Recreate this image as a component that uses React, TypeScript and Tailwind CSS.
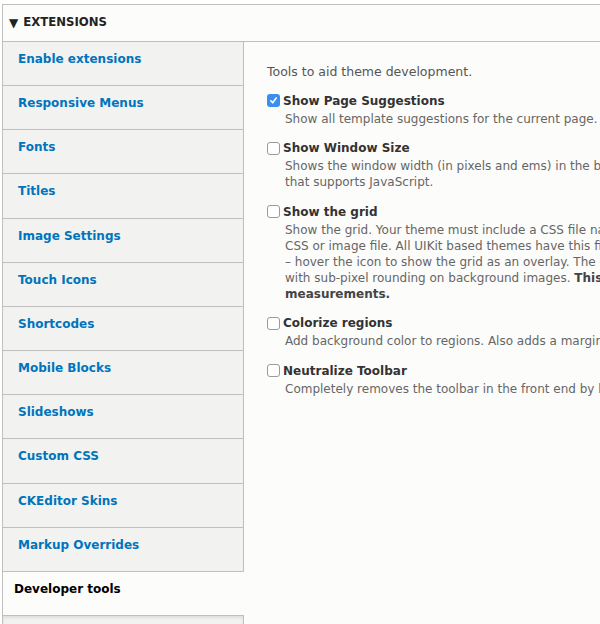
import React from 'react';

const tabs = [
  'Enable extensions',
  'Responsive Menus',
  'Fonts',
  'Titles',
  'Image Settings',
  'Touch Icons',
  'Shortcodes',
  'Mobile Blocks',
  'Slideshows',
  'Custom CSS',
  'CKEditor Skins',
  'Markup Overrides',
];

interface Option {
  label: string;
  checked: boolean;
  lines: React.ReactNode[];
}

const options: Option[] = [
  {
    label: 'Show Page Suggestions',
    checked: true,
    lines: ['Show all template suggestions for the current page. Disable when not in use.'],
  },
  {
    label: 'Show Window Size',
    checked: false,
    lines: [
      'Shows the window width (in pixels and ems) in the bottom corner of any browser',
      'that supports JavaScript.',
    ],
  },
  {
    label: 'Show the grid',
    checked: false,
    lines: [
      'Show the grid. Your theme must include a CSS file named grid.css or similar',
      'CSS or image file. All UIKit based themes have this file available to use',
      '– hover the icon to show the grid as an overlay. The grid may not be accurate',
      <>
        with sub-pixel rounding on background images.{' '}
        <b className="font-bold text-[#444]">This is not for precise</b>
      </>,
      <b className="font-bold text-[#444]">measurements.</b>,
    ],
  },
  {
    label: 'Colorize regions',
    checked: false,
    lines: ['Add background color to regions. Also adds a margin to help with layout.'],
  },
  {
    label: 'Neutralize Toolbar',
    checked: false,
    lines: ['Completely removes the toolbar in the front end by hiding it with CSS.'],
  },
];

function Checkbox({ checked }: { checked: boolean }) {
  if (checked) {
    return (
      <span className="flex h-[13px] w-[13px] shrink-0 items-center justify-center rounded-[3px] bg-[#3b8ef0]">
        <svg width="9" height="9" viewBox="0 0 9 9" fill="none">
          <path d="M1.8 4.8 L3.7 6.8 L7.2 2" stroke="white" strokeWidth="1.6" strokeLinecap="round" strokeLinejoin="round" />
        </svg>
      </span>
    );
  }
  return <span className="h-[13px] w-[13px] shrink-0 rounded-[3px] border border-[#9a9a9a] bg-white" />;
}

export default function App() {
  return (
    <div
      className="h-[624px] w-[600px] overflow-hidden bg-white pl-[2px] pt-[4px]"
      style={{ fontFamily: '"DejaVu Sans", Verdana, sans-serif' }}
    >
      <div className="w-[900px] border-l border-t border-[#bfbfbf] bg-[#fcfcfa]">
        {/* Details summary */}
        <div className="flex h-[37px] items-center border-b border-[#bfbfbf] pl-[6px] text-[11.7px] font-bold text-[#222]">
          <span className="mr-[5px] text-[12px] leading-none">▼</span>
          EXTENSIONS
        </div>

        <div className="flex">
          {/* Vertical tabs */}
          <div className="w-[241px] shrink-0">
            {tabs.map(t => (
              <div
                key={t}
                className="h-[44.17px] border-b border-r border-[#bfbfbf] bg-[#f2f2f0] pl-[15px] pt-[9px] text-[12px] leading-[16px] font-bold text-[#0074bd]"
              >
                {t}
              </div>
            ))}
            <div className="h-[44.17px] border-b border-[#bfbfbf] bg-[#fcfcfa] pl-[11px] pt-[9px] text-[12px] leading-[16px] font-bold text-[#000]">
              Developer tools
            </div>
            <div className="h-[44px] border-r border-[#bfbfbf] bg-[#f2f2f0] shadow-[inset_0_2px_3px_rgba(0,0,0,0.08)]" />
          </div>

          {/* Pane */}
          <div className="flex-1 pl-[23px] pt-[22px] text-[12.5px] text-[#555]">
            <p className="mb-[12px] leading-[16px]">Tools to aid theme development.</p>
            {options.map(o => (
              <div key={o.label} className="mb-[13px]">
                <div className="flex h-[17px] items-center gap-[3px]">
                  <Checkbox checked={o.checked} />
                  <span className="text-[12px] font-bold text-[#333]">{o.label}</span>
                </div>
                <div className="mt-[1.5px] pl-[18px] text-[12px] leading-[16px] text-[#666] whitespace-nowrap">
                  {o.lines.map((l, i) => (
                    <div key={i}>{l}</div>
                  ))}
                </div>
              </div>
            ))}
          </div>
        </div>
      </div>
    </div>
  );
}
